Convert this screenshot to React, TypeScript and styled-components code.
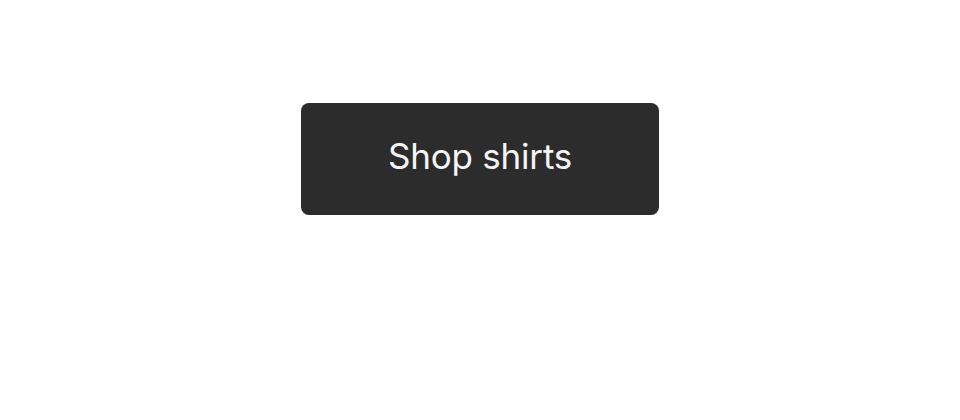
import React from "react";
import styled, { createGlobalStyle } from "styled-components";

const Global = createGlobalStyle`
  html, body { margin: 0; padding: 0; background: #ffffff; }
  body { font-family: "Inter", "Noto Sans", sans-serif; }
`;

const Page = styled.main`
  display: flex;
  justify-content: center;
  padding-top: 103px;
  width: 960px;
  height: 420px;
  box-sizing: border-box;
`;

const Button = styled.button`
  width: 358px;
  height: 112px;
  border: none;
  border-radius: 8px;
  background: #2c2c2c;
  color: #f5f5f5;
  font-family: "Inter", "Noto Sans", sans-serif;
  font-size: 35px;
  font-weight: 400;
  letter-spacing: -0.2px;
  cursor: pointer;
  display: flex;
  align-items: center;
  justify-content: center;
  padding: 0 0 7px 0;
  box-sizing: border-box;
`;

export default function App() {
  return (
    <>
      <Global />
      <Page>
        <Button type="button">Shop shirts</Button>
      </Page>
    </>
  );
}
